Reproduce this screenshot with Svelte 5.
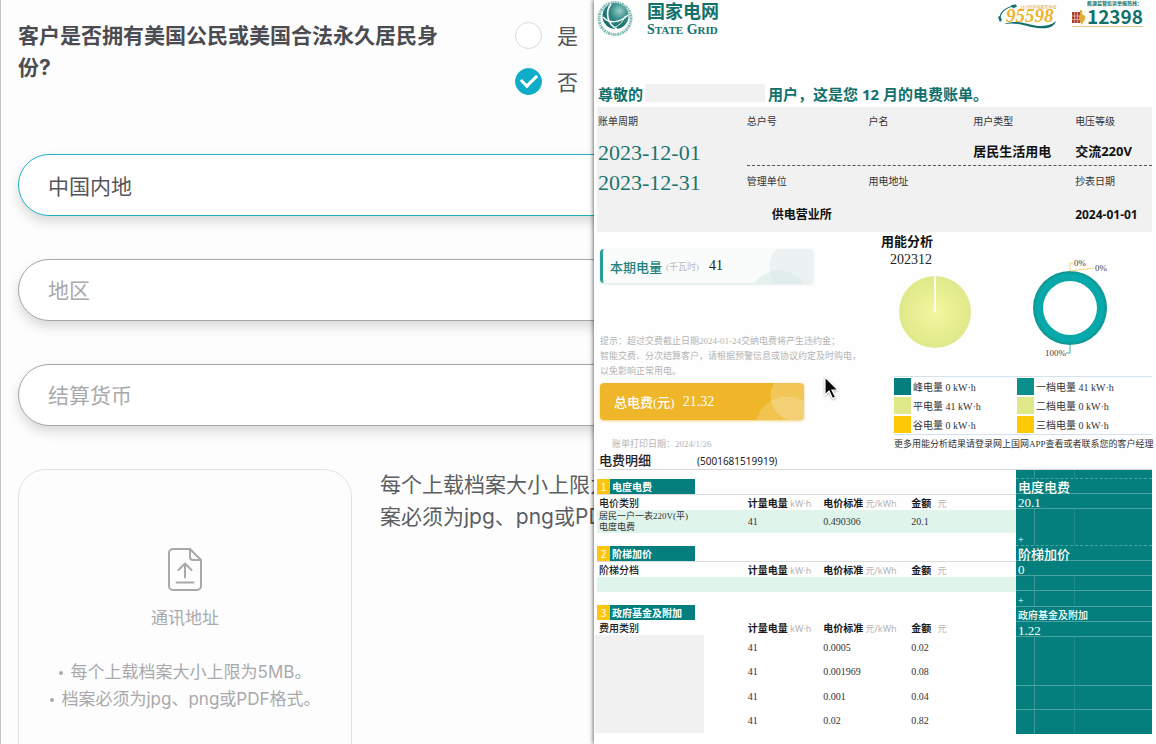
<script lang="ts">
  interface Fee {
    amount: string;
    rate: string;
    total: string;
  }

  interface SummaryRow {
    kind: 'title' | 'value' | 'plus' | 'blank';
    text?: string;
    height: number;
    small?: boolean;
    dashed?: boolean;
  }

  let citizen = $state('no');
  let country = $state('中国内地');
  let region = $state('');
  let currency = $state('');

  const legend = [
    { color: '#047f7d', text: '峰电量 0 kW·h' },
    { color: '#0b8e8c', text: '一档电量 41 kW·h' },
    { color: '#dfe98a', text: '平电量 41 kW·h' },
    { color: '#dfe98a', text: '二档电量 0 kW·h' },
    { color: '#ffc905', text: '谷电量 0 kW·h' },
    { color: '#ffc905', text: '三档电量 0 kW·h' }
  ];

  const funds: Fee[] = [
    { amount: '41', rate: '0.0005', total: '0.02' },
    { amount: '41', rate: '0.001969', total: '0.08' },
    { amount: '41', rate: '0.001', total: '0.04' },
    { amount: '41', rate: '0.02', total: '0.82' }
  ];

  const summary: SummaryRow[] = [
    { kind: 'blank', height: 9, dashed: true },
    { kind: 'title', text: '电度电费', height: 15 },
    { kind: 'value', text: '20.1', height: 15 },
    { kind: 'plus', text: '+', height: 37, dashed: true },
    { kind: 'title', text: '阶梯加价', height: 15 },
    { kind: 'value', text: '0', height: 15 },
    { kind: 'blank', height: 15 },
    { kind: 'plus', text: '+', height: 16 },
    { kind: 'title', text: '政府基金及附加', height: 15, small: true },
    { kind: 'value', text: '1.22', height: 15 },
    { kind: 'blank', height: 49 },
    { kind: 'blank', height: 24 },
    { kind: 'blank', height: 24 }
  ];
</script>

{#snippet tableHead(first: string)}
  <thead>
    <tr>
      <th class="col-name">{first}</th>
      <th class="col-amount">计量电量 <small>kW·h</small></th>
      <th class="col-rate">电价标准 <small>元/kWh</small></th>
      <th class="col-total">金额 <small class="yuan">元</small></th>
    </tr>
  </thead>
{/snippet}

{#snippet tag(no: number, title: string)}
  <h4 class="tag"><span class="tag-no">{no}</span><span class="tag-title">{title}</span></h4>
{/snippet}

<main class="screen">
  <section class="form-pane">
    <form class="form">
      <fieldset class="question">
        <p class="question-text">客户是否拥有美国公民或美国合法永久居民身份?</p>
        <div class="options">
          <label class="option">
            <input type="radio" name="citizen" value="yes" bind:group={citizen} />
            <span>是</span>
          </label>
          <label class="option">
            <input type="radio" name="citizen" value="no" bind:group={citizen} />
            <span>否</span>
          </label>
        </div>
      </fieldset>

      <input class="field active" type="text" aria-label="国家" bind:value={country} />
      <input class="field" type="text" aria-label="地区" placeholder="地区" bind:value={region} />
      <input class="field" type="text" aria-label="结算货币" placeholder="结算货币" bind:value={currency} />

      <div class="upload-row">
        <label class="upload">
          <input class="sr-only" type="file" accept=".jpg,.png,.pdf" />
          <svg width="34" height="43" viewBox="0 0 34 43" fill="none" stroke="#a9a9ac" stroke-width="2" stroke-linecap="round" stroke-linejoin="round" aria-hidden="true">
            <path d="M5 1h17l11 11v26a4 4 0 0 1-4 4H5a4 4 0 0 1-4-4V5a4 4 0 0 1 4-4z" />
            <path d="M22 1v8a3 3 0 0 0 3 3h8" />
            <path d="M17 29.500V15.500M10.500 22l6.500-6.500 6.500 6.500M8.500 34.500h17" />
          </svg>
          <span class="upload-title">通讯地址</span>
          <span class="upload-rules">
            <span>每个上载档案大小上限为5MB。</span>
            <span>档案必须为jpg、png或PDF格式。</span>
          </span>
        </label>
        <p class="upload-note">每个上载档案大小上限为5MB。档案必须为jpg、png或PDF格式。</p>
      </div>
    </form>
  </section>

  <article class="bill">
    <header class="bill-head">
      <svg class="globe" width="36" height="37" viewBox="0 0 36 37" aria-hidden="true">
        <defs>
          <radialGradient id="globe" cx="0.65" cy="0.3" r="0.8">
            <stop offset="0" stop-color="#9ad0cb" />
            <stop offset="0.450" stop-color="#2f8984" />
            <stop offset="1" stop-color="#0d6863" />
          </radialGradient>
        </defs>
        <circle cx="18" cy="18.500" r="16" fill="none" stroke="#7fb8b3" stroke-width="3" stroke-dasharray="1.200 0.700 2 0.800" />
        <circle cx="18.500" cy="16" r="13" fill="url(#globe)" />
        <path d="M14 4C8 12 10 24 20 29" fill="none" stroke="#fff" stroke-width="1.600" />
        <path d="M6 17c6 7 17 6 25-2" fill="none" stroke="#fff" stroke-width="1.400" />
        <path d="M16 28c6-2 10-6 12-12" fill="none" stroke="#d5ebe9" />
      </svg>
      <div class="brand">
        <strong>国家电网</strong>
        <span>S<small>TATE</small> G<small>RID</small></span>
      </div>
      <svg class="hotline" width="60" height="27" viewBox="0 0 60 27" role="img" aria-label="95598">
        <path d="M2 17C1 9 7 3 17 2" fill="none" stroke="#12716c" stroke-width="1.200" />
        <path d="M13 1l5-.500 1 2-4 2zM0 13l2-1 2 4-2 2z" fill="#12716c" />
        <text x="22" y="5" class="hot-small">24小时供电服务热线</text>
        <text x="8" y="18" class="hot-num">95598</text>
        <path d="M6 20c14-5 24 1 34 2 8 0 14-1 18-5-2 7-10 8-19 7-12-2-20-6-33-4z" fill="#12716c" />
      </svg>
      <div class="monitor">
        <span class="monitor-label">能源监管投诉举报热线：</span>
        <div class="monitor-line">
          <svg width="14" height="17" viewBox="0 0 14 17" aria-hidden="true">
            <path d="M0 4h8v11H0z" fill="#a93b32" />
            <path d="M0 8h8M0 11.500h8M2.700 4v11M5.400 4v11" stroke="#e3b8a8" stroke-width="0.800" />
            <path d="M8 2c2 0 3 1 2 4l3 2c1 3-1 5-2 6l-1 3-2-3-1-5 1-3z" fill="#e1ab38" />
          </svg>
          <strong>12398</strong>
        </div>
      </div>
    </header>

    <h1 class="greeting">尊敬的<span class="mask"></span>用户，这是您 12 月的电费账单。</h1>

    <section class="info">
      <dl class="period">
        <dt>账单周期</dt>
        <dd>2023-12-01</dd>
        <dd>2023-12-31</dd>
      </dl>
      <div class="info-rows">
        <dl class="info-row">
          <div><dt>总户号</dt></div>
          <div><dt>户名</dt></div>
          <div><dt>用户类型</dt><dd>居民生活用电</dd></div>
          <div><dt>电压等级</dt><dd>交流220V</dd></div>
        </dl>
        <dl class="info-row second">
          <div><dt>管理单位</dt><dd class="office">供电营业所</dd></div>
          <div class="wide"><dt>用电地址</dt></div>
          <div><dt>抄表日期</dt><dd>2024-01-01</dd></div>
        </dl>
      </div>
    </section>

    <section class="overview">
      <div class="totals">
        <p class="usage">
          <b>本期电量</b><small>(千瓦时)</small><span>41</span>
        </p>
        <p class="tips">
          提示：超过交费截止日期2024-01-24交纳电费将产生违约金；<br />
          智能交费、分次结算客户，请根据预警信息或协议约定及时购电，<br />
          以免影响正常用电。
        </p>
        <p class="cost"><b>总电费(元)</b><span>21.32</span></p>
        <p class="printed">账单打印日期：2024/1/26</p>
      </div>

      <div class="analysis">
        <div class="charts">
          <div class="pie-box">
            <h2>用能分析</h2>
            <p>202312</p>
            <svg width="74" height="74" viewBox="0 0 74 74" role="img" aria-label="峰平谷电量">
              <defs>
                <radialGradient id="pie">
                  <stop offset="0" stop-color="#f3f6a0" />
                  <stop offset="1" stop-color="#dfe989" />
                </radialGradient>
              </defs>
              <circle cx="37" cy="37" r="36" fill="url(#pie)" />
              <path d="M37 1v36" stroke="#fbfce6" stroke-width="2" />
            </svg>
          </div>
          <svg class="donut" width="90" height="106" viewBox="0 0 90 106" role="img" aria-label="分档电量">
            <defs>
              <radialGradient id="ring">
                <stop offset="0.720" stop-color="#08a5a5" />
                <stop offset="0.880" stop-color="#07acae" />
                <stop offset="1" stop-color="#10928f" />
              </radialGradient>
            </defs>
            <circle cx="40" cy="54" r="37" fill="url(#ring)" />
            <circle cx="40" cy="54" r="27" fill="#fff" />
            <path d="M40 17V9h3M40 17l24-3" fill="none" stroke="#f6d67c" />
            <path d="M40 91v8h-4" fill="none" stroke="#3faeae" />
            <text x="44" y="12">0%</text>
            <text x="65" y="17">0%</text>
            <text x="15" y="102">100%</text>
          </svg>
        </div>
        <ul class="legend">
          {#each legend as item}
            <li><i style="background: {item.color}"></i>{item.text}</li>
          {/each}
        </ul>
        <p class="more">更多用能分析结果请登录网上国网APP查看或者联系您的客户经理</p>
      </div>
    </section>

    <div class="detail-title">
      <h3>电费明细</h3>
      <span>(5001681519919)</span>
    </div>

    <section class="detail">
      <div class="tables">
        {@render tag(1, '电度电费')}
        <table class="ruled">
          {@render tableHead('电价类别')}
          <tbody>
            <tr class="mint">
              <td class="plan">居民一户一表220V(平)<br />电度电费</td>
              <td>41</td>
              <td>0.490306</td>
              <td>20.1</td>
            </tr>
          </tbody>
        </table>

        {@render tag(2, '阶梯加价')}
        <table class="ruled">
          {@render tableHead('阶梯分档')}
          <tbody>
            <tr class="mint empty"><td></td><td></td><td></td><td></td></tr>
          </tbody>
        </table>

        {@render tag(3, '政府基金及附加')}
        <table>
          {@render tableHead('费用类别')}
          <tbody>
            {#each funds as fee, i}
              <tr class="fund">
                {#if i === 0}
                  <td rowspan="4"><div class="redacted"></div></td>
                {/if}
                <td>{fee.amount}</td>
                <td>{fee.rate}</td>
                <td>{fee.total}</td>
              </tr>
            {/each}
          </tbody>
        </table>
      </div>

      <aside class="summary">
        {#each summary as row}
          <div
            class="sum-row {row.kind}"
            class:small={row.small}
            class:dashed={row.dashed}
            style="height: {row.height}px"
          >
            {row.text ?? ''}
          </div>
        {/each}
      </aside>
    </section>
  </article>

  <svg class="cursor" width="16" height="24" viewBox="0 0 16 24" aria-hidden="true">
    <path d="M2 1v18l4-4 3.500 7.500 3-1.500L9 14h6z" fill="#0a0a0a" stroke="#fff" stroke-width="1.200" />
  </svg>
</main>

<style>
  :global(body) {
    margin: 0;
    background: #fff;
  }

  .screen {
    position: relative;
    display: grid;
    grid-template-columns: minmax(0, 594fr) minmax(0, 562fr);
    height: 100vh;
    overflow: hidden;
    font-family: Inter, 'Noto Sans CJK SC', sans-serif;
  }

  .screen * {
    box-sizing: border-box;
  }

  h1, h2, h3, h4, p, dl, dd, ul {
    margin: 0;
    padding: 0;
  }

  .sr-only {
    position: absolute;
    width: 1px;
    height: 1px;
    overflow: hidden;
    clip-path: inset(50%);
  }

  /* Account form */
  .form-pane {
    overflow: hidden;
    border-left: 1px solid #c4c4c4;
    background: #fdfdfd;
  }

  .form {
    display: flex;
    flex-direction: column;
    gap: 43px;
    width: 130%;
    padding: 12px 17px 0;
  }

  .question {
    display: flex;
    gap: 67px;
    margin: 0 0 7px;
    padding: 0;
    border: 0;
  }

  .question-text {
    width: 430px;
    padding-top: 8px;
    font-size: 21px;
    font-weight: 700;
    line-height: 32px;
    color: #4b4c52;
  }

  .option {
    display: flex;
    align-items: center;
    gap: 15px;
    height: 46px;
    font-size: 21px;
    color: #55565b;
  }

  .option input {
    appearance: none;
    width: 27px;
    height: 27px;
    margin: 0;
    border: 1px solid #d8d9dc;
    border-radius: 50%;
    background: #fff;
  }

  .option input:checked {
    display: grid;
    place-items: center;
    border-color: #0fadc9;
    background: #0fadc9;
  }

  .option input:checked::before {
    content: '';
    width: 13px;
    height: 7px;
    margin-bottom: 4px;
    border: solid #fff;
    border-width: 0 0 3px 3px;
    transform: rotate(-45deg);
  }

  .field {
    height: 62px;
    padding: 0 29px;
    border: 1px solid #a5a5a8;
    border-radius: 31px;
    background: #fff;
    box-shadow: 0 6px 12px rgba(0, 0, 0, 0.14);
    font: 21px Inter, 'Noto Sans CJK SC', sans-serif;
    color: #55565b;
    outline: none;
  }

  .field.active {
    border-color: #1fb2c2;
  }

  .field::placeholder {
    color: #a9a9ac;
    opacity: 1;
  }

  .upload-row {
    display: flex;
    align-items: flex-start;
    gap: 28px;
  }

  .upload {
    display: flex;
    flex: none;
    flex-direction: column;
    align-items: center;
    width: 334px;
    padding: 78px 20px 60px;
    border: 1px solid #e0e3e8;
    border-radius: 28px;
    color: #a9a9ac;
    font-size: 17px;
  }

  .upload-title {
    margin-top: 13px;
    line-height: 28px;
  }

  .upload-rules {
    display: flex;
    flex-direction: column;
    align-items: center;
    margin-top: 27px;
    line-height: 27px;
    white-space: nowrap;
  }

  .upload-rules span {
    display: flex;
    align-items: center;
    gap: 8px;
  }

  .upload-rules span::before {
    content: '';
    width: 4px;
    height: 4px;
    border-radius: 50%;
    background: #a9a9ac;
  }

  .upload-note {
    flex: none;
    width: 325px;
    font-size: 21px;
    line-height: 32px;
    color: #5c5d62;
  }

  /* Electricity bill */
  .bill {
    position: relative;
    padding: 0 4px 0 3px;
    background: #fefefe;
    box-shadow: -1px 0 4px rgba(0, 0, 0, 0.55);
    font-family: 'Liberation Serif', 'Noto Sans CJK SC', serif;
    font-size: 10px;
    color: #333;
  }

  .bill-head {
    display: flex;
    align-items: flex-start;
    height: 79px;
    color: #12716c;
  }

  .brand {
    display: flex;
    flex-direction: column;
    margin-left: 14px;
    padding-top: 1px;
    white-space: nowrap;
  }

  .brand strong {
    font-size: 18px;
    line-height: 22px;
  }

  .brand span {
    font-size: 14px;
    font-weight: 700;
    line-height: 14px;
  }

  .brand small {
    font-size: 11px;
  }

  .hotline {
    margin: 4px 0 0 auto;
  }

  .hot-small {
    font: 4px 'Noto Sans CJK SC', sans-serif;
    fill: #dba63c;
  }

  .hot-num {
    font: italic 700 19px 'Liberation Serif', serif;
    fill: #eeb22c;
  }

  .monitor {
    margin: 0 9px 0 14px;
    font-family: 'Noto Sans CJK SC', sans-serif;
  }

  .monitor-label {
    display: block;
    padding-left: 15px;
    font-size: 5px;
    font-weight: 700;
    line-height: 6px;
  }

  .monitor-line {
    display: flex;
    align-items: center;
    gap: 1px;
    height: 21px;
    border-bottom: 1px solid #ddc88c;
  }

  .monitor-line strong {
    font-size: 19px;
    line-height: 20px;
  }

  .greeting {
    display: flex;
    align-items: center;
    height: 28px;
    padding-left: 1px;
    font: 700 15px 'Noto Sans', 'Noto Sans CJK SC', sans-serif;
    color: #0f706c;
    white-space: pre;
  }

  .mask {
    width: 120px;
    height: 18px;
    margin: 0 3px 0 2px;
    background: #f1f1f1;
  }

  .info {
    display: flex;
    background: #f1f1f1;
  }

  .period {
    flex: 149 1 0;
    padding-left: 1px;
  }

  .period dt {
    margin-bottom: 1px;
  }

  .period dd {
    font-size: 22px;
    line-height: 30px;
    color: #1c746f;
  }

  .info dt {
    line-height: 30px;
  }

  .info-rows {
    flex: 406 1 0;
  }

  .info-row {
    display: grid;
    grid-template-columns: 122fr 105fr 102fr 77fr;
  }

  .info-row dd {
    font: 700 13px/28px 'Noto Sans', 'Noto Sans CJK SC', sans-serif;
    color: #111;
    white-space: nowrap;
  }

  .info-row.second {
    border-top: 1px dashed #555;
  }

  .info-row.second dt {
    line-height: 32px;
  }

  .info-row.second dd {
    font-size: 12px;
    line-height: 34px;
  }

  .info-row .office {
    padding-left: 25px;
  }

  .wide {
    grid-column: span 2;
  }

  .overview {
    display: flex;
    justify-content: space-between;
    height: 220px;
  }

  .totals {
    padding: 17px 0 0 3px;
  }

  .usage,
  .cost {
    display: flex;
    align-items: center;
    border-radius: 4px;
    font-size: 13px;
  }

  .usage {
    width: 213px;
    height: 34px;
    padding-left: 7px;
    border-left: 3px solid #2b9c98;
    background:
      radial-gradient(circle at 176px 52px, rgba(215, 233, 231, 0.6) 30px, transparent 31px),
      radial-gradient(circle at 194px 18px, #ebf2f1 27px, transparent 28px),
      #fafbfb;
    box-shadow: 0 1px 3px rgba(40, 130, 125, 0.2);
    color: #222;
  }

  .usage span,
  .cost span {
    font-size: 14px;
  }

  .usage b {
    font-weight: 500;
    color: #1f8480;
  }

  .usage small {
    margin: 0 10px 0 4px;
    font-size: 9px;
    color: #bbb;
  }

  .tips {
    margin-top: 51px;
    font-size: 9px;
    line-height: 15px;
    color: #b4b4b4;
    white-space: nowrap;
  }

  .cost {
    width: 204px;
    height: 37px;
    margin-top: 4px;
    padding-left: 14px;
    gap: 8px;
    background:
      radial-gradient(circle at 195px 13px, rgba(255, 255, 255, 0.22) 24px, transparent 25px),
      radial-gradient(circle at 187px 45px, rgba(255, 255, 255, 0.18) 31px, transparent 32px),
      #eeb628;
    box-shadow: 0 1px 3px rgba(238, 182, 40, 0.6);
    color: #fff;
  }

  .cost b {
    font-weight: 500;
  }

  .printed {
    margin-top: 17px;
    padding-left: 12px;
    font-size: 9px;
    line-height: 14px;
    color: #b4b4b4;
  }

  .analysis {
    width: 258px;
  }

  .charts {
    display: flex;
    justify-content: space-between;
    height: 144px;
  }

  .pie-box {
    width: 84px;
    margin-left: -13px;
    color: #222;
  }

  .pie-box h2 {
    font: 700 13px/18px 'Noto Sans CJK SC', sans-serif;
    color: #111;
  }

  .pie-box p {
    padding-left: 9px;
    font-size: 14px;
    line-height: 20px;
  }

  .pie-box svg {
    display: block;
    margin: 5px 0 0 17px;
  }

  .donut {
    margin: 22px 32px 0 0;
    font-size: 9px;
    fill: #444;
  }

  .legend {
    display: grid;
    grid-template-columns: 123fr 135fr;
    grid-auto-rows: 19px;
    border: solid #d3e2ec;
    border-width: 1px 0;
    list-style: none;
  }

  .legend li {
    display: flex;
    align-items: center;
    gap: 2px;
    white-space: pre;
  }

  .legend i {
    width: 17px;
    height: 17px;
  }

  .more {
    font-size: 9px;
    line-height: 18px;
    text-align: right;
    white-space: nowrap;
  }

  .detail-title {
    display: flex;
    align-items: center;
    height: 18px;
    padding-left: 2px;
    border-bottom: 1px solid #d8d8d8;
    color: #222;
  }

  .detail-title h3 {
    width: 98px;
    font-size: 13px;
    font-weight: 500;
    line-height: 16px;
  }

  .detail-title span {
    font: 10px/16px 'Noto Sans', sans-serif;
  }

  .detail {
    display: flex;
    align-items: flex-start;
  }

  .tables {
    flex: 419 1 0;
    padding-top: 9px;
  }

  .tag {
    display: flex;
    width: 98px;
    height: 15px;
    font: 700 10px/15px 'Noto Sans CJK SC', sans-serif;
    color: #fff;
  }

  .tag-no {
    width: 13px;
    background: #fdc60c;
    font-weight: 400;
    text-align: center;
  }

  .tag-title {
    flex: 1;
    padding-left: 2px;
    background: #047f7d;
  }

  table {
    width: 100%;
    border-collapse: separate;
    border-spacing: 0;
    table-layout: fixed;
  }

  table + .tag {
    margin-top: 13px;
  }

  .ruled {
    border-top: 1px solid #dcdcdc;
  }

  th,
  td {
    padding: 0;
    text-align: left;
    white-space: nowrap;
  }

  th {
    height: 15px;
    font: 700 10px/14px 'Noto Sans CJK SC', sans-serif;
    color: #1a1a1a;
  }

  th.col-name {
    width: 36%;
    padding-left: 2px;
    font-weight: 500;
  }

  .col-amount {
    width: 18%;
  }

  .col-rate {
    width: 21%;
  }

  th small {
    font: 400 9px/9px 'Noto Sans', 'Noto Sans CJK SC', sans-serif;
    color: #b5b5b5;
  }

  .yuan {
    margin-left: 4px;
  }

  .mint td {
    height: 23px;
    background: #dff5ec;
  }

  .mint.empty td {
    height: 15px;
  }

  td.plan {
    padding-left: 2px;
    font-size: 9px;
    line-height: 11px;
  }

  .redacted {
    width: 109px;
    height: 98px;
    margin-left: -2px;
    background: #f1f1f1;
  }

  .summary {
    flex: 136 1 0;
    background: #047f7d;
    color: #fff;
  }

  .sum-row {
    padding-left: 2px;
    border-bottom: 1px solid #4aa3a1;
    line-height: 17px;
  }

  .sum-row.dashed {
    border-bottom-style: dashed;
  }

  .sum-row:last-child {
    border-bottom: 0;
  }

  .sum-row.title,
  .sum-row.value {
    font-size: 13px;
    font-weight: 500;
  }

  .sum-row.title.small {
    font-size: 10px;
  }

  .sum-row.plus {
    display: flex;
    align-items: flex-end;
    line-height: 11px;
  }

  .sum-row.blank,
  .sum-row.plus {
    background: linear-gradient(#3b9a98, #3b9a98) 13% 0 / 1px 100% no-repeat,
      linear-gradient(#1d8b89, #1d8b89) 43% 0 / 1px 100% no-repeat;
  }

  .cursor {
    position: absolute;
    top: 50.5%;
    left: 71.2%;
    filter: drop-shadow(0 1px 1px rgba(0, 0, 0, 0.3));
  }
</style>
